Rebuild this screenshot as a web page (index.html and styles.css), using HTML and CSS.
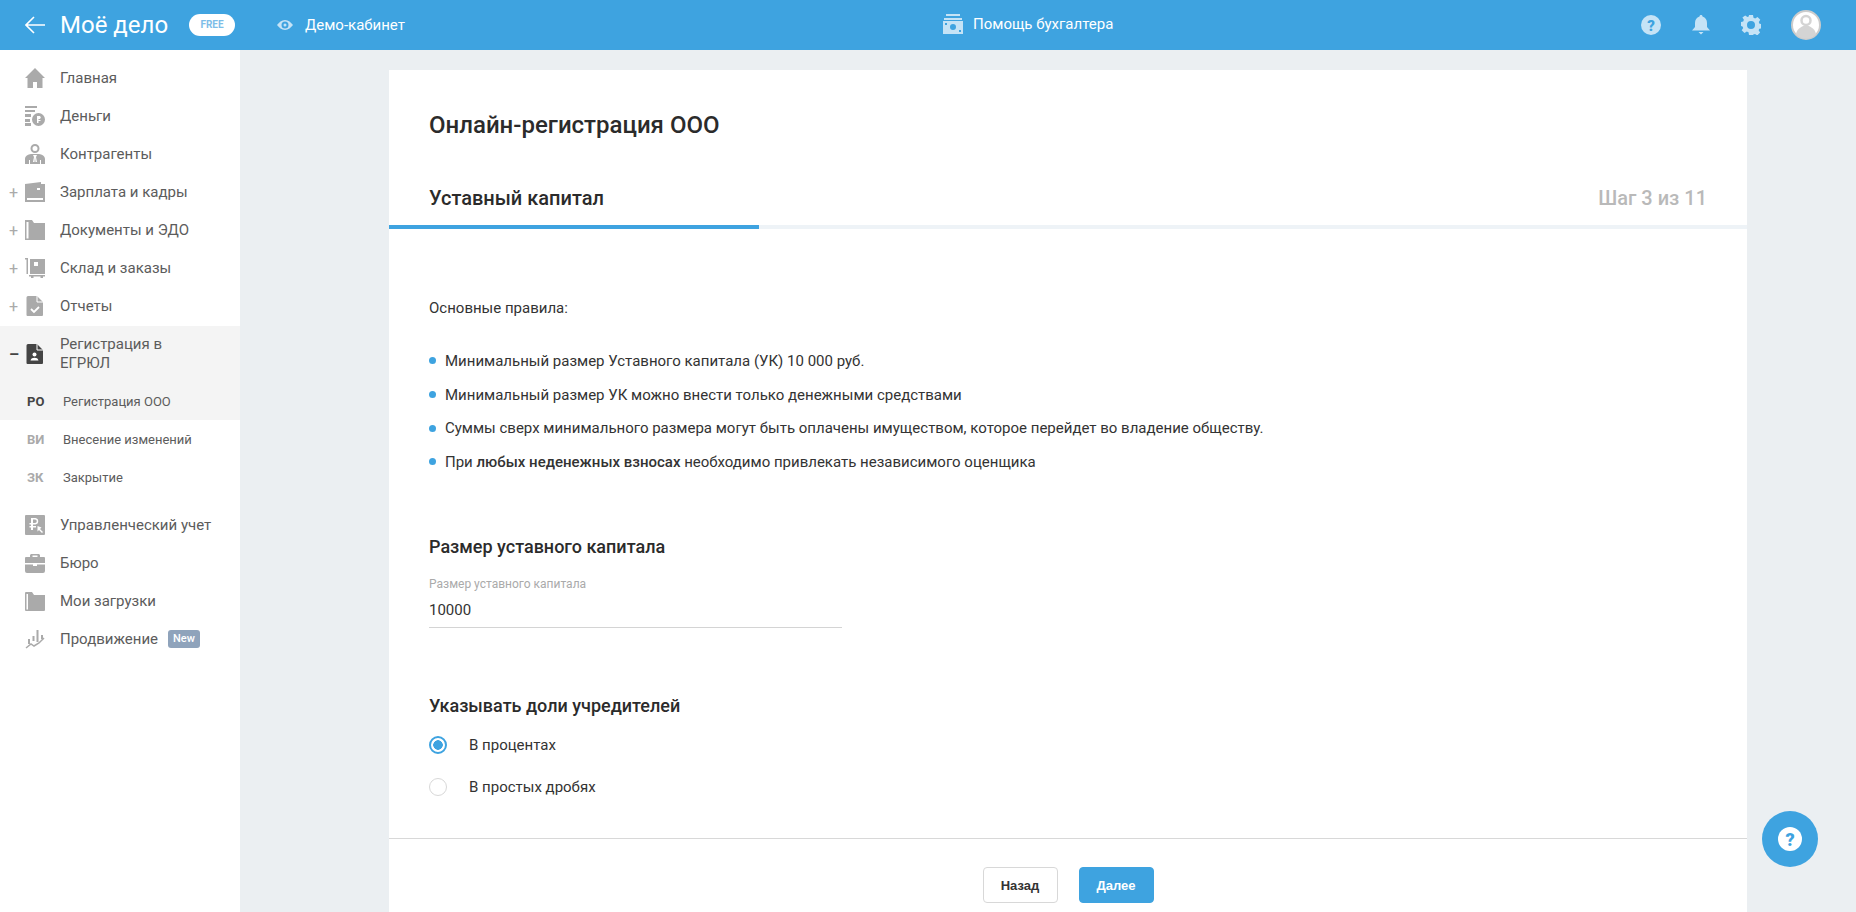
FILE: index.html
```html
<!DOCTYPE html>
<html lang="ru">
<head>
    <meta charset="UTF-8">
    <title>Онлайн-регистрация ООО</title>
    <link rel="stylesheet" href="styles.css">
</head>
<body>
    <!-- верхняя панель -->
    <header class="topbar">
        <div class="topbar-left">
            <svg class="back" width="20" height="18" viewBox="0 0 20 18"><path d="M9 1 1 9l8 8M1 9h19" fill="none" stroke="#fff" stroke-width="1.6"/></svg>
            <span class="logo">Моё дело</span>
            <span class="free">FREE</span>
            <svg class="eye" width="16" height="12" viewBox="0 0 16 12"><path fill-rule="evenodd" d="M8 1c3.400 0 6 2.500 8 5-2 2.500-4.600 5-8 5S2 8.500 0 6c2-2.500 4.600-5 8-5zm0 1.500a3.500 3.500 0 1 0 0 7 3.500 3.500 0 0 0 0-7zM8 4.500a1.500 1.500 0 1 1 0 3 1.500 1.500 0 0 1 0-3z" fill="#c5e3f6"/></svg>
            <span class="demo">Демо-кабинет</span>
        </div>
        <div class="helper">
            <svg width="20" height="20" viewBox="0 0 20 20"><path fill-rule="evenodd" d="M3 0h14v2H3zM1 4h18v2H1zM0 7h20v13H0zm10 3a3 3 0 1 0 0 6 3 3 0 0 0 0-6zM2 9v2h2V9zm14 7v2h2v-2z" fill="#c5e3f6"/></svg>
            <span>Помощь бухгалтера</span>
        </div>
        <div class="topbar-right">
            <svg width="20" height="20" viewBox="0 0 20 20"><circle cx="10" cy="10" r="10" fill="#c5e3f6"/><text x="10" y="15.500" class="q-mark">?</text></svg>
            <svg width="20" height="20" viewBox="-1 0 20 20"><path d="M9 0c1 0 1.500.7 1.500 1.500C13.500 2.300 15 5 15 8v4l3 3.500H0L3 12V8c0-3 1.500-5.700 4.500-6.500C7.500.7 8 0 9 0zM6.500 17h5L9 19.500z" fill="#c5e3f6"/></svg>
            <svg width="20" height="20" viewBox="0 0 20 20"><path fill-rule="evenodd" d="M8 0h4l.5 2.700 1.700.7L16.500 2l2.800 2.800-1.500 2.300.7 1.700 2.500.5v4l-2.700.5-.7 1.500 1.500 2.300-2.800 2.800-2.300-1.500-1.700.7L12 20H8l-.5-2.700-1.700-.7L3.500 18 .7 15.200l1.500-2.300-.7-1.500L-.500 11V7l2.700-.5.700-1.700L1.400 2.500 4.200.4l2.300 1.500 1.200-.5zM10 6a4 4 0 1 0 0 8 4 4 0 0 0 0-8z" fill="#c5e3f6"/></svg>
            <svg width="30" height="30" viewBox="0 0 30 30"><circle cx="15" cy="15" r="14" fill="#fff" stroke="#ccc" stroke-width="2"/><circle cx="15" cy="10.500" r="4.500" fill="none" stroke="#d4d4d4" stroke-width="2.500"/><path d="M5 24c1-5 5-7 7-8h6c2 1 6 3 7 8a13 13 0 0 1-20 0z" fill="#d4d4d4"/></svg>
        </div>
    </header>

    <div class="layout">
        <!-- меню -->
        <nav class="sidebar">
            <a class="nav-row"><span class="toggle"></span>
                <svg class="nav-icon" width="20" height="20" viewBox="0 0 20 20"><path d="M10 0 20 10h-2.500v10H12v-6H8v6H2.500V10H0z" fill="#aaa"/></svg>
                <span>Главная</span></a>
            <a class="nav-row"><span class="toggle"></span>
                <svg class="nav-icon" width="20" height="20" viewBox="0 0 20 20"><path fill-rule="evenodd" d="M0 0h12v2H0zM0 4h10v2H0zM0 8h6v3H0zM0 13h5v3H0zM0 17h6v3H0zM13.500 7a6.500 6.500 0 1 1 0 13 6.500 6.500 0 0 1 0-13zM12 10v7h1.500v-2h2v-1h-2v-1h1.500a2 2 0 0 0 0-3z" fill="#aaa"/></svg>
                <span>Деньги</span></a>
            <a class="nav-row"><span class="toggle"></span>
                <svg class="nav-icon" width="20" height="20" viewBox="0 0 20 20"><circle cx="10" cy="4.500" r="3.500" fill="none" stroke="#aaa" stroke-width="2"/><path fill-rule="evenodd" d="M0 20v-5c0-3 3-4.500 6-5h8c3 .5 6 2 6 5v5zM8 11l1 2-1 5h1.500l.5-5 .5 5H12l-1-5 1-2zM4 16v4h1v-4zm11 0v4h1v-4z" fill="#aaa"/></svg>
                <span>Контрагенты</span></a>
            <a class="nav-row"><span class="toggle">+</span>
                <svg class="nav-icon" width="20" height="20" viewBox="0 0 20 20"><path fill-rule="evenodd" d="M0 2 16 0v2h4v18H0zm2 14v2h16v-2zm10-10v2h3V6z" fill="#aaa"/></svg>
                <span>Зарплата и кадры</span></a>
            <a class="nav-row"><span class="toggle">+</span>
                <svg class="nav-icon" width="20" height="20" viewBox="0 0 20 20"><path fill-rule="evenodd" d="M0 0h7l2 3h11v17H0zm1.500 2v16.500H3.500V2z" fill="#aaa"/></svg>
                <span>Документы и ЭДО</span></a>
            <a class="nav-row"><span class="toggle">+</span>
                <svg class="nav-icon" width="20" height="20" viewBox="0 0 20 20"><path d="M0 0h3v16H1.500V1.500H0zM5 1h15v15H5zM9 4v4h4V4zM4 17h16v1.500h-2v1.500h-2.500v-1.500h-7V20H6v-1.500H4z" fill="#aaa" fill-rule="evenodd"/></svg>
                <span>Склад и заказы</span></a>
            <a class="nav-row"><span class="toggle">+</span>
                <svg class="nav-icon" width="20" height="20" viewBox="0 0 20 20"><path d="M3 0h9l6 6v13a1 1 0 0 1-1 1H2.500a1 1 0 0 1-1-1V1.500A1.500 1.500 0 0 1 3 0z" fill="#aaa"/><path d="m6 13 3 3 5-5" fill="none" stroke="#fff" stroke-width="1.800"/><path d="M12 0v6h6" fill="none" stroke="#fff"/></svg>
                <span>Отчеты</span></a>

            <div class="nav-group">
                <a class="nav-row nav-row-open"><span class="toggle toggle-open">–</span>
                    <svg class="nav-icon" width="20" height="20" viewBox="0 0 20 20"><path d="M3 0h9l6 6v13a1 1 0 0 1-1 1H2.500a1 1 0 0 1-1-1V1.500A1.500 1.500 0 0 1 3 0z" fill="#444"/><circle cx="9.500" cy="10.500" r="2" fill="#fff"/><path d="M5.500 16.500c.5-2 2-2.700 4-2.700s3.500.7 4 2.700z" fill="#fff"/><path d="M12 0v6h6" fill="none" stroke="#fff"/></svg>
                    <span>Регистрация в<br>ЕГРЮЛ</span></a>
                <a class="sub-row sub-row-active"><b>РО</b><span>Регистрация ООО</span></a>
            </div>
            <a class="sub-row"><b>ВИ</b><span>Внесение изменений</span></a>
            <a class="sub-row"><b>ЗК</b><span>Закрытие</span></a>

            <div class="nav-rest">
                <a class="nav-row"><span class="toggle"></span>
                    <svg class="nav-icon" width="20" height="20" viewBox="0 0 20 20"><path fill-rule="evenodd" d="M1 0h18a1 1 0 0 1 1 1v18a1 1 0 0 1-1 1H1a1 1 0 0 1-1-1V1a1 1 0 0 1 1-1zm5 3v5H4.500v1.500H6V11H4.500v1.500H6V15h2v-2.500h3V11H8V9.500h2.500a3.300 3.300 0 0 0 0-6.500zm2 1.500h2a1.700 1.700 0 0 1 0 3.500H8zM12.500 11v5.500l1.500-1.500 3 3 1-1-3-3 1.500-1.500z" fill="#aaa"/></svg>
                    <span>Управленческий учет</span></a>
                <a class="nav-row"><span class="toggle"></span>
                    <svg class="nav-icon" width="20" height="20" viewBox="0 0 20 20"><path fill-rule="evenodd" d="M6 1h8l1 1v2h4a1 1 0 0 1 1 1v5H0V5a1 1 0 0 1 1-1h4V2zm1.500 1.500V4h5V2.500zM0 11.500h8V13h4v-1.500h8V18a2 2 0 0 1-2 2H2a2 2 0 0 1-2-2z" fill="#aaa"/></svg>
                    <span>Бюро</span></a>
                <a class="nav-row"><span class="toggle"></span>
                    <svg class="nav-icon" width="20" height="20" viewBox="0 0 20 20"><path fill-rule="evenodd" d="M1 1h6l2 3h11v15a1 1 0 0 1-1 1H1a1 1 0 0 1-1-1V2a1 1 0 0 1 1-1zm.500 2v15.500H3V3z" fill="#aaa"/></svg>
                    <span>Мои загрузки</span></a>
                <a class="nav-row"><span class="toggle"></span>
                    <svg class="nav-icon" width="20" height="20" viewBox="0 0 20 20"><path d="M3 10h2v5H3zM7.500 7h2v5h-2zM11.500 1h2v12h-2zM16 6h2v4h-2z" fill="#aaa"/><path d="m1 19 5-4 3 2 5-3 5-5" fill="none" stroke="#aaa" stroke-width="1.500"/></svg>
                    <span>Продвижение</span><span class="new-badge">New</span></a>
            </div>
        </nav>

        <main class="content">
            <section class="card">
                <h1 class="card-title">Онлайн-регистрация ООО</h1>
                <div class="step-head">
                    <h2>Уставный капитал</h2>
                    <span class="step-count">Шаг 3 из 11</span>
                </div>
                <div class="progress"><div class="progress-fill"></div></div>

                <div class="card-body">
                    <p class="rules-title">Основные правила:</p>
                    <ul class="rules">
                        <li><span>Минимальный размер Уставного капитала (УК) 10 000 руб.</span></li>
                        <li><span>Минимальный размер УК можно внести только денежными средствами</span></li>
                        <li><span>Суммы сверх минимального размера могут быть оплачены имуществом, которое перейдет во владение обществу.</span></li>
                        <li><span>При <b>любых неденежных взносах</b> необходимо привлекать независимого оценщика</span></li>
                    </ul>

                    <h3 class="section-title">Размер уставного капитала</h3>
                    <div class="field">
                        <label class="field-label">Размер уставного капитала</label>
                        <div class="field-value">10000</div>
                    </div>

                    <h3 class="section-title section-shares">Указывать доли учредителей</h3>
                    <div class="radio-row"><span class="radio radio-on"></span>В процентах</div>
                    <div class="radio-row"><span class="radio"></span>В простых дробях</div>
                </div>

                <div class="card-footer">
                    <button class="btn">Назад</button>
                    <button class="btn btn-primary">Далее</button>
                </div>
            </section>
        </main>
    </div>

    <button class="help-fab">
        <svg width="24" height="24" viewBox="0 0 24 24"><circle cx="12" cy="12" r="12" fill="#fff"/><text x="12" y="18.500" class="q-mark q-mark-big">?</text></svg>
    </button>
</body>
</html>
```

FILE: styles.css
```css
html, body {
    margin: 0;
    padding: 0;
    height: 100%;
    overflow: hidden;
}

body {
    background-color: #ebeff2;
    font-family: Roboto, Arial, sans-serif;
    font-size: 15px;
    color: #333;
}

/* верхняя панель */
.topbar {
    display: flex;
    align-items: center;
    height: 50px;
    background-color: #3ea3e0;
    color: #fff;
}

.topbar-left {
    display: flex;
    align-items: center;
    flex: none;
    width: 943px;
    padding-left: 25px;
    box-sizing: border-box;
}

.logo {
    margin-left: 15px;
    width: 129px;
    font-size: 24px;
    white-space: nowrap;
}

.free {
    width: 46px;
    height: 22px;
    border-radius: 11px;
    background-color: #fff;
    color: #7dbde8;
    font-size: 10px;
    font-weight: 700;
    line-height: 22px;
    text-align: center;
}

.eye {
    margin-left: 42px;
}

.demo {
    margin-left: 12px;
}

.helper {
    display: flex;
    align-items: center;
    gap: 10px;
    margin-bottom: 2px;
}

.topbar-right {
    display: flex;
    align-items: center;
    gap: 30px;
    margin-left: auto;
    padding-right: 35px;
}

.q-mark {
    font-family: Roboto, Arial, sans-serif;
    font-size: 15px;
    font-weight: 900;
    text-anchor: middle;
    fill: #3ea3e0;
}

.q-mark-big {
    font-size: 18px;
}

/* меню */
.layout {
    display: flex;
    height: calc(100% - 50px);
}

.sidebar {
    flex: none;
    width: 240px;
    padding-top: 9px;
    box-sizing: border-box;
    background-color: #fff;
    color: #5c5c5c;
}

.nav-row {
    display: flex;
    align-items: center;
    height: 38px;
}

.toggle {
    flex: none;
    width: 25px;
    padding-left: 9px;
    box-sizing: border-box;
    color: #aaa;
    font-size: 16px;
}

.toggle-open {
    color: #444;
    font-weight: 700;
}

.nav-icon {
    flex: none;
    margin-right: 15px;
}

.nav-group {
    margin-top: 1px;
    background-color: #f4f4f4;
}

.nav-row-open {
    height: 56px;
    line-height: 19px;
}

.sub-row {
    display: flex;
    align-items: center;
    height: 38px;
    font-size: 13px;
}

.sub-row b {
    width: 63px;
    padding-left: 27px;
    box-sizing: border-box;
    color: #aaa;
    font-weight: 700;
}

.sub-row-active b {
    color: #444;
}

.nav-rest {
    margin-top: 10px;
}

.new-badge {
    margin-left: 10px;
    padding: 0 5px;
    height: 18px;
    border-radius: 3px;
    background-color: #8fa3bb;
    color: #fff;
    font-size: 11px;
    font-weight: 500;
    line-height: 18px;
}

/* карточка */
.content {
    flex: 1;
    padding: 20px 0 0 149px;
}

.card {
    width: 1358px;
    height: 900px;
    background-color: #fff;
}

.card-title {
    margin: 0;
    padding: 40px 40px 0;
    color: #2b2b2b;
    font-size: 24px;
    font-weight: 500;
    line-height: 30px;
}

.step-head {
    display: flex;
    justify-content: space-between;
    align-items: center;
    margin-top: 46px;
    padding: 0 40px 15px;
    line-height: 24px;
}

.step-head h2 {
    margin: 0;
    color: #2b2b2b;
    font-size: 20px;
    font-weight: 500;
}

.step-count {
    color: #b9b9b9;
    font-size: 20px;
    font-weight: 500;
}

.progress {
    height: 4px;
    background-color: #eef3f7;
}

.progress-fill {
    width: 370px;
    height: 100%;
    background-color: #3ea3e0;
}

.card-body {
    height: 610px;
    padding: 69px 40px 0;
    box-sizing: border-box;
    border-bottom: 1px solid #d8d8d8;
}

.rules-title {
    margin: 0 0 26px;
    line-height: 20px;
}

.rules {
    margin: 0 0 56px;
    padding: 0;
    list-style: none;
}

.rules li {
    display: flex;
    align-items: center;
    height: 33.7px;
}

.rules li::before {
    content: "";
    flex: none;
    width: 7px;
    height: 7px;
    margin-right: 9px;
    border-radius: 50%;
    background-color: #3ea3e0;
}

.rules li b {
    font-weight: 500;
}

.section-title {
    margin: 0;
    color: #2b2b2b;
    font-size: 18px;
    font-weight: 500;
    line-height: 24px;
}

.field {
    width: 413px;
    margin-top: 17px;
    padding-bottom: 7px;
    border-bottom: 1px solid #d4d4d4;
}

.field-label {
    display: block;
    color: #aaa;
    font-size: 12px;
    line-height: 16px;
}

.field-value {
    margin-top: 8px;
    color: #333;
    font-size: 15px;
    line-height: 20px;
}

.section-shares {
    margin-top: 66px;
    margin-bottom: 6px;
}

.radio-row {
    display: flex;
    align-items: center;
    height: 42px;
}

.radio {
    flex: none;
    width: 18px;
    height: 18px;
    margin-right: 22px;
    box-sizing: border-box;
    border: 1px solid #d8d8d8;
    border-radius: 50%;
}

.radio-on {
    border: 2px solid #3ea3e0;
    background: radial-gradient(circle, #3ea3e0 4.500px, #fff 5px);
}

.card-footer {
    display: flex;
    justify-content: center;
    gap: 21px;
    padding-top: 28px;
}

.btn {
    width: 75px;
    height: 36px;
    padding: 0;
    border: 1px solid #d8d8d8;
    border-radius: 4px;
    background-color: #fff;
    color: #333;
    font-family: "Liberation Sans", Arial, sans-serif;
    font-size: 13px;
    font-weight: 700;
}

.btn-primary {
    border-color: #3ea3e0;
    background-color: #3ea3e0;
    color: #fff;
}

.help-fab {
    position: fixed;
    right: 38px;
    bottom: 45px;
    display: flex;
    align-items: center;
    justify-content: center;
    width: 56px;
    height: 56px;
    padding: 0;
    border: none;
    border-radius: 50%;
    background-color: #3ea3e0;
}
```
